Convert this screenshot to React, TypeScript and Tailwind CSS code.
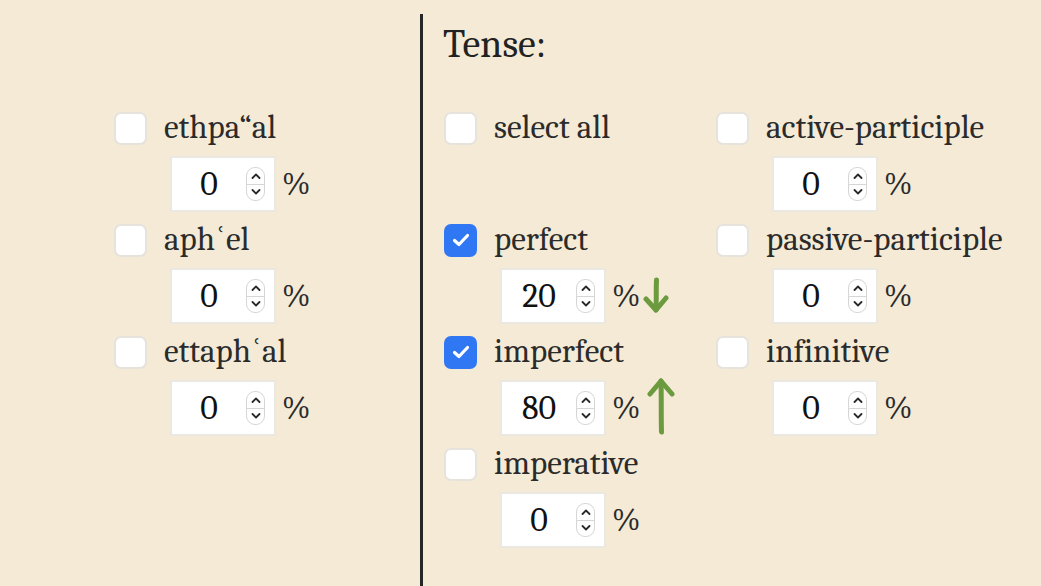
import React from "react"

type Item = {
  label: string
  checked?: boolean
  value?: number
  arrow?: "up" | "down"
  noInput?: boolean
}

const voiceItems: Item[] = [
  { label: "ethpa\u201Cal", value: 0 },
  { label: "aph\u02BFel", value: 0 },
  { label: "ettaph\u02BFal", value: 0 },
]

const tenseLeft: Item[] = [
  { label: "select all", noInput: true },
  { label: "perfect", checked: true, value: 20, arrow: "down" },
  { label: "imperfect", checked: true, value: 80, arrow: "up" },
  { label: "imperative", value: 0 },
]

const tenseRight: Item[] = [
  { label: "active-participle", value: 0 },
  { label: "passive-participle", value: 0 },
  { label: "infinitive", value: 0 },
]

function Checkbox({ checked }: { checked?: boolean }) {
  if (checked) {
    return (
      <div className="w-[33px] h-[33px] rounded-[7px] bg-[#3077f3] flex items-center justify-center shrink-0">
        <svg width="18" height="14" viewBox="0 0 18 14" fill="none">
          <path d="M2.5 7.5 L7 11.5 L15.5 2.5" stroke="white" strokeWidth="3.2" strokeLinecap="round" strokeLinejoin="round" />
        </svg>
      </div>
    )
  }
  return <div className="w-[33px] h-[33px] rounded-[7px] bg-white border-2 border-[#e6e3dc] shrink-0" />
}

function Spinner() {
  return (
    <div className="w-[19px] h-[34px] rounded-[9px] border border-[#d6d6d6] bg-white flex flex-col">
      <div className="flex-1 flex items-center justify-center border-b border-[#d6d6d6]">
        <svg width="10" height="6" viewBox="0 0 10 6" fill="none">
          <path d="M1.5 5 L5 1.5 L8.5 5" stroke="#2a2a2a" strokeWidth="1.8" strokeLinecap="round" strokeLinejoin="round" />
        </svg>
      </div>
      <div className="flex-1 flex items-center justify-center">
        <svg width="10" height="6" viewBox="0 0 10 6" fill="none">
          <path d="M1.5 1 L5 4.5 L8.5 1" stroke="#2a2a2a" strokeWidth="1.8" strokeLinecap="round" strokeLinejoin="round" />
        </svg>
      </div>
    </div>
  )
}

function DownArrow() {
  return (
    <svg width="26" height="37" viewBox="0 0 26 37" fill="none" className="ml-[3px] -mt-[1px]">
      <path d="M13.5 3 C13 12 13.5 24 13 33" stroke="#6b9b3e" strokeWidth="5" strokeLinecap="round" />
      <path d="M3 22 L13 33 L23 21" stroke="#6b9b3e" strokeWidth="5" strokeLinecap="round" strokeLinejoin="round" />
    </svg>
  )
}

function UpArrow() {
  return (
    <svg width="28" height="59" viewBox="0 0 28 59" fill="none" className="ml-[7px] -mt-[3px]">
      <path d="M14 4 C14.5 20 14 40 14.5 55" stroke="#6b9b3e" strokeWidth="5" strokeLinecap="round" />
      <path d="M3 17 L14 4 L25 17" stroke="#6b9b3e" strokeWidth="5" strokeLinecap="round" strokeLinejoin="round" />
    </svg>
  )
}

function Entry({ item }: { item: Item }) {
  return (
    <div className={item.noInput ? "h-[112px]" : "pb-[12px]"}>
      <div className="flex items-center h-[32px]">
        <Checkbox checked={item.checked} />
        <span className="ml-[17px] font-serif text-[33px] text-[#2b2b2b] whitespace-nowrap">{item.label}</span>
      </div>
      {!item.noInput && (
        <div className="flex items-center mt-[12px] pl-[56px]">
          <div className="w-[106px] h-[56px] bg-white border-2 border-[#ebe8e1] flex items-center">
            <span className="w-[74px] text-center font-serif text-[34px] text-[#111]">{item.value}</span>
            <Spinner />
          </div>
          <span className="ml-[6px] font-serif text-[32px] text-[#2b2b2b]">%</span>
          {item.arrow === "down" && <DownArrow />}
          {item.arrow === "up" && <UpArrow />}
        </div>
      )}
    </div>
  )
}

export default function App() {
  return (
    <div className="w-[1041px] h-[586px] bg-[#f4ead6] flex overflow-hidden font-serif">
      <div className="w-[420px] shrink-0 pl-[114px] pt-[112px]">
        {voiceItems.map((it) => (
          <Entry key={it.label} item={it} />
        ))}
      </div>
      <div className="mt-[14px] border-l-[3px] border-[#262626] flex-1 pl-[21px] pt-[10px]">
        <h2 className="font-serif text-[40px] leading-none text-[#222] -ml-[1px]">Tense:</h2>
        <div className="flex mt-[48px]">
          <div className="w-[272px]">
            {tenseLeft.map((it) => (
              <Entry key={it.label} item={it} />
            ))}
          </div>
          <div>
            {tenseRight.map((it) => (
              <Entry key={it.label} item={it} />
            ))}
          </div>
        </div>
      </div>
    </div>
  )
}
